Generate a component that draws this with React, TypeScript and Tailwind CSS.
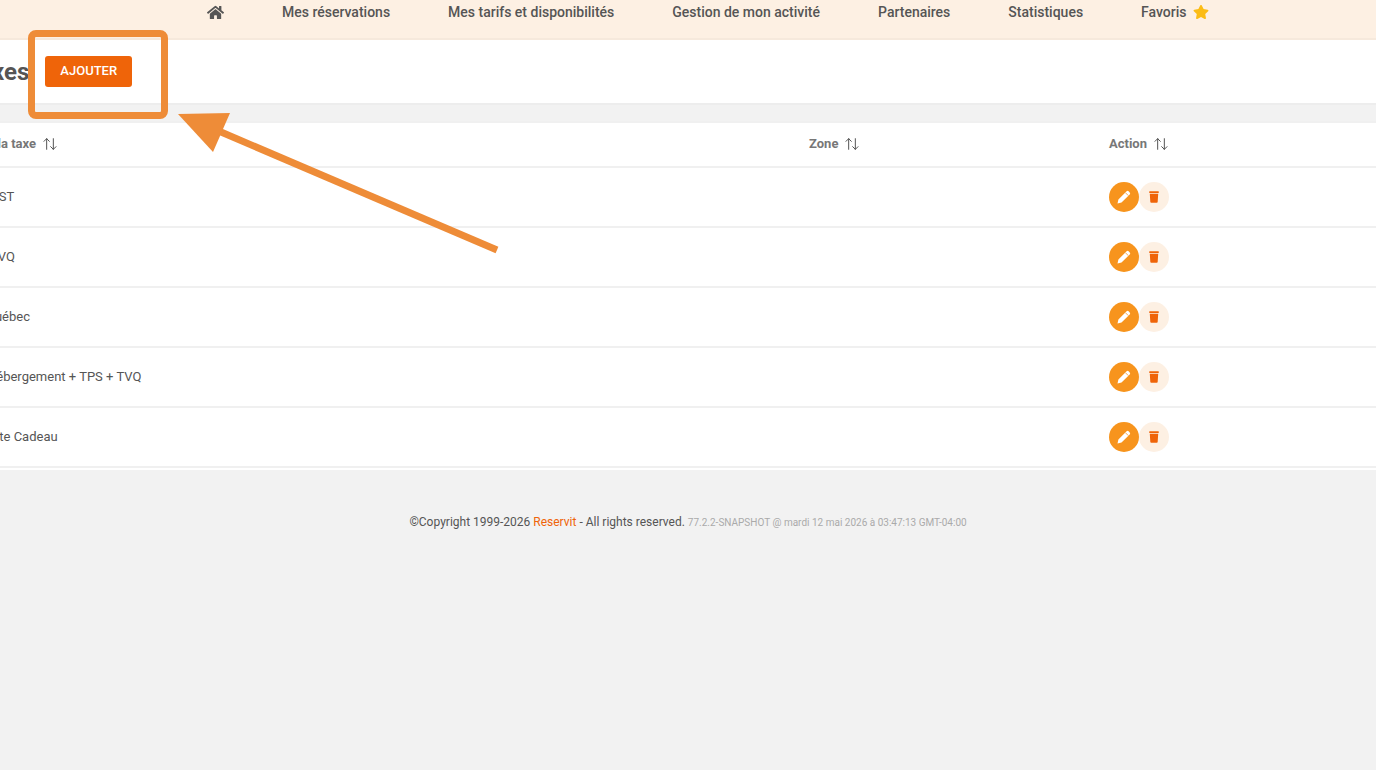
import { ArrowUpDown } from 'lucide-react';
import { FaHome, FaStar } from 'react-icons/fa';

const navItems = [
  'Mes réservations',
  'Mes tarifs et disponibilités',
  'Gestion de mon activité',
  'Partenaires',
  'Statistiques',
];

// the page is scrolled sideways in the picture, so the first column is cut
const taxes = [
  { name: 'GST', offset: '-ml-[10px]' },
  { name: 'TVQ', offset: '-ml-[10px]' },
  { name: 'Québec', offset: '-ml-[14px]' },
  { name: 'Hébergement + TPS + TVQ', offset: '-ml-[13px]' },
  { name: 'Carte Cadeau', offset: '-ml-[21px]' },
];

function SortIcon() {
  return <ArrowUpDown className="w-[16px] h-[16px] text-[#555] ml-[6px]" strokeWidth={1.5} />;
}

function PencilIcon() {
  return (
    <svg viewBox="0 0 16 16" className="w-[16px] h-[16px]">
      <path d="M1.500 14.500l.9-4L10.600 2.300a1.400 1.400 0 0 1 2 0l1.100 1.100a1.400 1.400 0 0 1 0 2L5.500 13.600z" fill="#fff" />
      <path d="M9.300 3.600l3.100 3.100" stroke="#f7941d" strokeWidth="0.8" />
    </svg>
  );
}

function TrashIcon() {
  return (
    <svg viewBox="0 0 16 16" className="w-[14px] h-[14px]">
      <rect x="2.500" y="1.500" width="11" height="1.800" rx="0.5" fill="#ef6409" />
      <path d="M3.200 4.400h9.600l-.6 9.400a1 1 0 0 1-1 .9H4.800a1 1 0 0 1-1-.9z" fill="#ef6409" />
    </svg>
  );
}

function TaxRow({ name, offset }: { name: string; offset: string }) {
  return (
    <div className="grid grid-cols-[809px_300px_1fr] items-center h-[60px] border-b-2 border-[#f0f0f0] text-[13px] text-[#555]">
      <div className={`${offset} whitespace-nowrap`}>{name}</div>
      <div />
      <div className="flex items-center">
        <button className="w-[30px] h-[30px] rounded-full bg-[#f7941d] flex items-center justify-center">
          <PencilIcon />
        </button>
        <button className="w-[30px] h-[30px] rounded-full bg-[#fdf0e3] flex items-center justify-center">
          <TrashIcon />
        </button>
      </div>
    </div>
  );
}

export default function App() {
  return (
    <div className="relative h-[770px] overflow-hidden bg-[#f2f2f2] font-['Roboto',sans-serif]">
      {/* top nav */}
      <nav className="flex items-center gap-[58px] h-[40px] pl-[207px] pb-[14px] bg-[#fdf0e3] border-b-2 border-[#f6e9dc] text-[14px] font-medium text-[#555]">
        <FaHome className="w-[17px] h-[17px] text-[#555]" />
        {navItems.map((item) => (
          <span key={item} className="whitespace-nowrap">{item}</span>
        ))}
        <span className="flex items-center gap-[6px] whitespace-nowrap">
          Favoris <FaStar className="w-[16px] h-[16px] text-[#fbbc15]" />
        </span>
      </nav>

      {/* page title */}
      <div className="flex items-center gap-[16px] h-[65px] bg-white border-b-2 border-[#ededed]">
        <h1 className="-ml-[34px] pt-[1px] text-[24px] font-bold leading-none text-[#555]">Taxes</h1>
        <button className="w-[87px] h-[31px] mb-[1px] rounded-[3px] bg-[#ef6409] text-white text-[13px] font-medium">
          AJOUTER
        </button>
      </div>

      {/* table */}
      <div className="mt-[16px] pb-[2px] bg-white border-t-2 border-[#f0f0f0]">
        <div className="grid grid-cols-[809px_300px_1fr] items-center h-[45px] pb-[2px] border-b-2 border-[#f0f0f0] text-[13px] font-bold text-[#777]">
          <div className="-ml-[51px] flex items-center whitespace-nowrap">Nom de la taxe <SortIcon /></div>
          <div className="flex items-center">Zone <SortIcon /></div>
          <div className="flex items-center">Action <SortIcon /></div>
        </div>
        {taxes.map((tax) => (
          <TaxRow key={tax.name} name={tax.name} offset={tax.offset} />
        ))}
      </div>

      {/* footer */}
      <div className="mt-[43px] text-center text-[12px] text-[#555]">
        ©Copyright 1999-2026 <span className="text-[#ef6409]">Reservit</span> - All rights reserved.{' '}
        <span className="text-[10px] text-[#aaa]">77.2.2-SNAPSHOT @ mardi 12 mai 2026 à 03:47:13 GMT-04:00</span>
      </div>

      {/* annotation */}
      <div className="absolute left-[28px] top-[30px] w-[140px] h-[89px] rounded-[8px] border-[7px] border-[#ee8c38]" />
      <svg className="absolute left-0 top-0 pointer-events-none" width="1376" height="770">
        <line x1="497" y1="250" x2="214" y2="129" stroke="#ee8c38" strokeWidth="7" />
        <polygon points="178,114 230,113 213,152" fill="#ee8c38" />
      </svg>
    </div>
  );
}
